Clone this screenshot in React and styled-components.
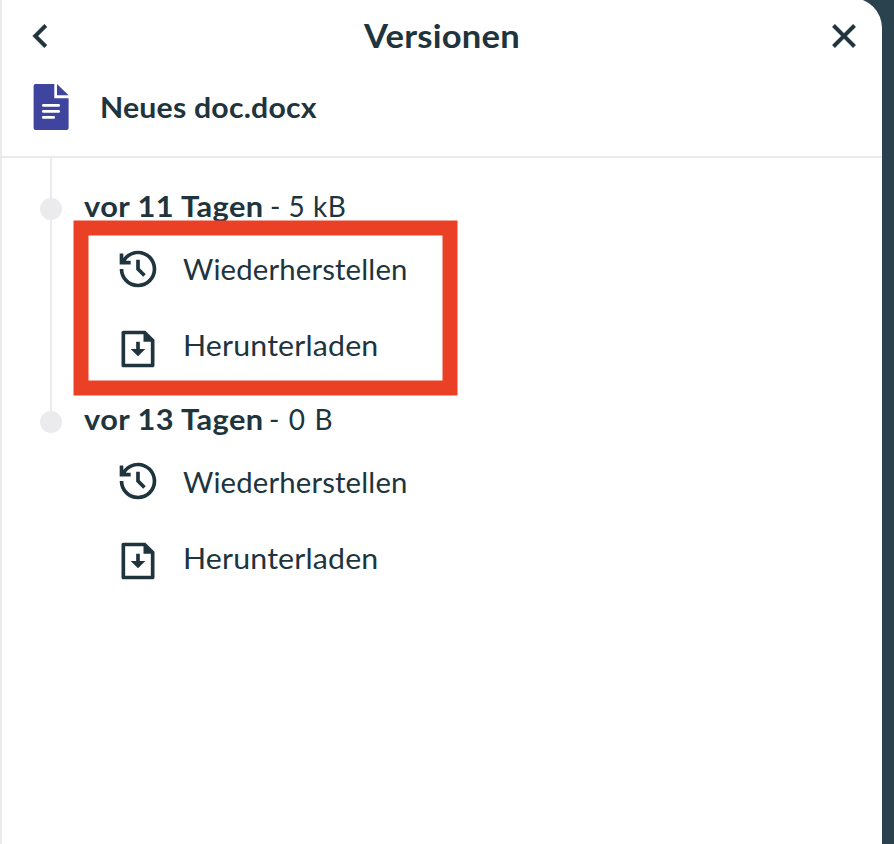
import React from "react";
import styled, { createGlobalStyle } from "styled-components";
import { RiArrowLeftSLine, RiCloseLine, RiHistoryLine, RiFileDownloadLine } from "react-icons/ri";

const ink = "#20343e";
const line = "#ebebed";

const GlobalStyle = createGlobalStyle`
  *, *::before, *::after { box-sizing: border-box; }
  body {
    margin: 0;
    background: #2a424e;
    color: ${ink};
    font-family: Lato, "Open Sans", sans-serif;
    overflow: hidden;
  }
`;

const Panel = styled.main`
  width: 882px;
  height: 846px;
  margin-top: -2px;
  padding-top: 2px;
  background: #fff;
  border-left: 2px solid ${line};
  border-top-right-radius: 30px;
`;

const Header = styled.header`
  display: grid;
  grid-template-columns: 44px 1fr 44px;
  align-items: center;
  height: 72px;
  padding: 0 16px;
`;

const IconButton = styled.button`
  display: flex;
  padding: 0;
  border: 0;
  background: none;
  color: inherit;
  svg {
    width: 44px;
    height: 44px;
    stroke: currentColor;
    stroke-width: 0.25px;
    stroke-linejoin: round;
  }
`;

const Title = styled.h1`
  margin: 0;
  text-align: center;
  font-size: 32px;
  line-height: 40px;
  font-weight: 700;
  letter-spacing: 0.2px;
  transform: scaleX(1.08);
`;

const FileRow = styled.div`
  display: flex;
  align-items: flex-start;
  height: 86px;
  padding: 12px 0 0 31px;
  border-bottom: 2px solid ${line};
`;

const FileName = styled.h2`
  margin: 5px 0 0 31px;
  font-size: 28px;
  line-height: 36px;
  font-weight: 700;
  letter-spacing: 0.18px;
  white-space: nowrap;
  transform: scaleX(1.08);
  transform-origin: left;
`;

const Timeline = styled.ol`
  margin: 0;
  padding: 0 0 0 38px;
  list-style: none;
`;

const Version = styled.li`
  display: grid;
  grid-template-columns: 22px 1fr;
  column-gap: 22px;
  height: ${(p) => (p.$first ? 253 : 213)}px;
`;

const Rail = styled.div`
  display: flex;
  flex-direction: column;
  align-items: center;
`;

const Segment = styled.span`
  width: 2px;
  height: ${(p) => p.$height}px;
  background: ${line};
`;

const Dot = styled.span`
  width: 22px;
  height: 22px;
  border-radius: 50%;
  background: ${line};
`;

const Body = styled.div`
  position: relative;
  margin-top: ${(p) => (p.$first ? 30 : -10)}px;
`;

const Meta = styled.p`
  display: flex;
  margin: 0;
  height: 36px;
  font-size: 28px;
  line-height: 36px;
  white-space: pre;
`;

const Age = styled.strong`
  flex: none;
  width: ${(p) => p.$width}px;
  font-weight: 700;
  letter-spacing: 0.38px;
  transform: scaleX(1.1);
  transform-origin: left;
`;

const Size = styled.span`
  letter-spacing: ${(p) => p.$tracking}px;
`;

const Actions = styled.div`
  display: flex;
  flex-direction: column;
  gap: 36px;
  margin-top: ${(p) => (p.$first ? 23 : 22)}px;
  padding-left: 32px;
`;

const Action = styled.button`
  display: flex;
  align-items: flex-start;
  height: 44px;
  padding: 0;
  border: 0;
  background: none;
  color: inherit;
  font: 400 28px/36px Lato, "Open Sans", sans-serif;
  svg { width: 44px; height: 44px; flex: none; }
`;

const ActionLabel = styled.span`
  margin: ${(p) => p.$top}px 0 0 23px;
  letter-spacing: 0.15px;
  transform: scaleX(${(p) => p.$stretch});
  transform-origin: left;
`;

const Highlight = styled.div`
  position: absolute;
  left: -11px;
  top: 32px;
  width: 384px;
  height: 175px;
  border: 15px solid #ea4026;
  transform: translate(0.5px, 0.5px);
`;

const DocIcon = styled.svg`
  width: 36px;
  height: 46px;
  flex: none;
`;

const versions = [
  { age: "vor 11 Tagen", size: "- 5 kB", ageWidth: 186, tracking: 0.5, first: true },
  { age: "vor 13 Tagen", size: "- 0 B", ageWidth: 185, tracking: 1.1, first: false },
];

export default function App() {
  return (
    <>
      <GlobalStyle />
      <Panel>
        <Header>
          <IconButton aria-label="Zurück"><RiArrowLeftSLine /></IconButton>
          <Title>Versionen</Title>
          <IconButton aria-label="Schließen"><RiCloseLine /></IconButton>
        </Header>
        <FileRow>
          <DocIcon viewBox="0 0 36 46">
            <path fill="#3f449f" d="M2.5 0H21.3V14.2H35.6V44Q35.6 46 33.6 46H2.5Q.6 46 .6 44V2Q.6 0 2.5 0Z" />
            <path fill="#3f449f" d="M24 0L35.6 11.3H24Z" />
            <path stroke="#fff" strokeWidth="2.7" strokeLinecap="round" d="M10.3 21.4H25.7M10.3 27.4H25.7M10.3 33.4H20.7" />
          </DocIcon>
          <FileName>Neues doc.docx</FileName>
        </FileRow>
        <Timeline>
          {versions.map((v) => (
            <Version key={v.age} $first={v.first}>
              <Rail>
                {v.first && <Segment $height={40} />}
                <Dot />
                {v.first && <Segment $height={191} />}
              </Rail>
              <Body $first={v.first}>
                <Meta><Age $width={v.ageWidth}>{v.age}</Age><Size $tracking={v.tracking}>{v.size}</Size></Meta>
                <Actions $first={v.first}>
                  <Action><RiHistoryLine /><ActionLabel $top={v.first ? 4 : 5} $stretch={1.047}>Wiederherstellen</ActionLabel></Action>
                  <Action><RiFileDownloadLine /><ActionLabel $top={v.first ? 0 : 1} $stretch={1.083}>Herunterladen</ActionLabel></Action>
                </Actions>
                {v.first && <Highlight />}
              </Body>
            </Version>
          ))}
        </Timeline>
      </Panel>
    </>
  );
}
